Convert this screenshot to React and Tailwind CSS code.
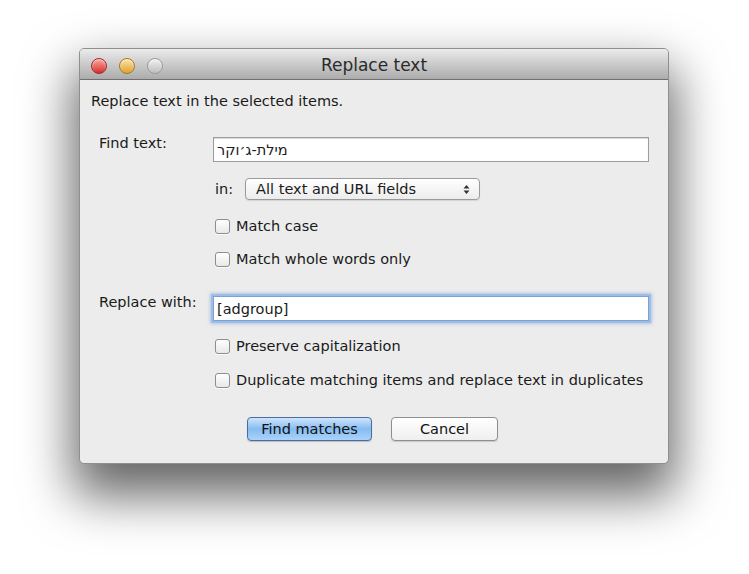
import React from 'react';

const font = { fontFamily: '"DejaVu Sans", "Noto Sans", sans-serif' };

function Light({ from, to, ring }) {
  return (
    <div
      className={`h-[16px] w-[16px] rounded-full border ${ring} bg-gradient-to-b ${from} ${to} shadow-[inset_0_1px_2px_rgba(255,255,255,0.6)]`}
    />
  );
}

function Check({ label }) {
  return (
    <label className="flex h-[18px] items-center gap-[6px]">
      <span className="h-[15px] w-[15px] rounded-[3px] border border-[#8e8e8e] bg-gradient-to-b from-white to-[#e8e8e8] shadow-[0_1px_0_rgba(255,255,255,0.8)]" />
      {label}
    </label>
  );
}

export default function App() {
  return (
    <div className="min-h-[574px] w-[749px] bg-white pl-[79px] pt-[48px]" style={font}>
      <div className="flex h-[416px] w-[590px] flex-col overflow-hidden rounded-[5px] border border-[#8f8f8f] bg-[#ececec] shadow-[0_26px_50px_6px_rgba(0,0,0,0.6)]">
        {/* title bar */}
        <div className="relative flex h-[31px] shrink-0 items-center border-b border-[#6f6f6f] bg-gradient-to-b from-[#ebebeb] to-[#acacac] px-[11px] pt-[3px]">
          <div className="flex gap-[12px]">
            <Light from="from-[#f7a0a0]" to="to-[#d6252a]" ring="border-[#a0292a]" />
            <Light from="from-[#fbe3a4]" to="to-[#e0a125]" ring="border-[#a57a1f]" />
            <Light from="from-[#f2f2f2]" to="to-[#bdbdbd]" ring="border-[#9a9a9a]" />
          </div>
          <div className="absolute inset-0 flex items-center justify-center pt-[3px] text-[17px] text-[#2a2a2a]">
            Replace text
          </div>
        </div>

        {/* body */}
        <div className="flex flex-col px-[11px] pt-[12px] text-[14.5px] leading-[18px] text-[#1a1a1a]">
          <div>Replace text in the selected items.</div>

          <div className="mt-[24px] flex">
            <div className="w-[122px] pl-[8px]">Find text:</div>
            <div className="flex flex-1 flex-col pr-[8px] pt-[3px]">
              <div className="flex h-[25px] items-center border border-[#9c9c9c] bg-white px-[3px] shadow-[inset_0_1px_1px_rgba(0,0,0,0.15)]">
                <span dir="rtl">מילת-ג׳וקר</span>
              </div>
              <div className="mt-[16px] flex items-center">
                <span className="pl-[2px]">in:</span>
                <div className="ml-[12px] flex h-[22px] w-[235px] items-center justify-between rounded-[4px] border border-[#9a9a9a] bg-gradient-to-b from-white to-[#ececec] pl-[10px] pr-[9px] shadow-[0_1px_1px_rgba(0,0,0,0.1)]">
                  <span>All text and URL fields</span>
                  <svg width="7" height="11" viewBox="0 0 7 11">
                    <path d="M0.5 4.5 L3.5 1 L6.5 4.5 Z" fill="#333" />
                    <path d="M0.5 6.5 L3.5 10 L6.5 6.5 Z" fill="#333" />
                  </svg>
                </div>
              </div>
              <div className="mt-[17px] pl-[2px]">
                <Check label="Match case" />
              </div>
              <div className="mt-[15px] pl-[2px]">
                <Check label="Match whole words only" />
              </div>
            </div>
          </div>

          <div className="mt-[25px] flex">
            <div className="w-[122px] pl-[8px]">Replace with:</div>
            <div className="flex flex-1 flex-col pr-[8px] pt-[3px]">
              <div className="flex h-[25px] items-center border border-[#7aa2d6] bg-white px-[3px] shadow-[0_0_0_2px_#9dbde6,0_0_3px_3px_rgba(120,160,220,0.5)]">
                [adgroup]
              </div>
              <div className="mt-[16px] pl-[2px]">
                <Check label="Preserve capitalization" />
              </div>
              <div className="mt-[16px] pl-[2px]">
                <Check label="Duplicate matching items and replace text in duplicates" />
              </div>
            </div>
          </div>

          <div className="mt-[28px] flex gap-[19px] pl-[156px]">
            <button className="h-[24px] w-[125px] rounded-[4px] border border-[#4a6d9e] bg-gradient-to-b from-[#cfe4fb] via-[#86bcf2] to-[#a9d3fa] text-[14.5px] text-[#111] shadow-[0_1px_1px_rgba(0,0,0,0.2)]">
              Find matches
            </button>
            <button className="h-[24px] w-[107px] rounded-[4px] border border-[#8f8f8f] bg-gradient-to-b from-white to-[#efefef] text-[14.5px] text-[#111] shadow-[0_1px_1px_rgba(0,0,0,0.15)]">
              Cancel
            </button>
          </div>
        </div>
      </div>
    </div>
  );
}
